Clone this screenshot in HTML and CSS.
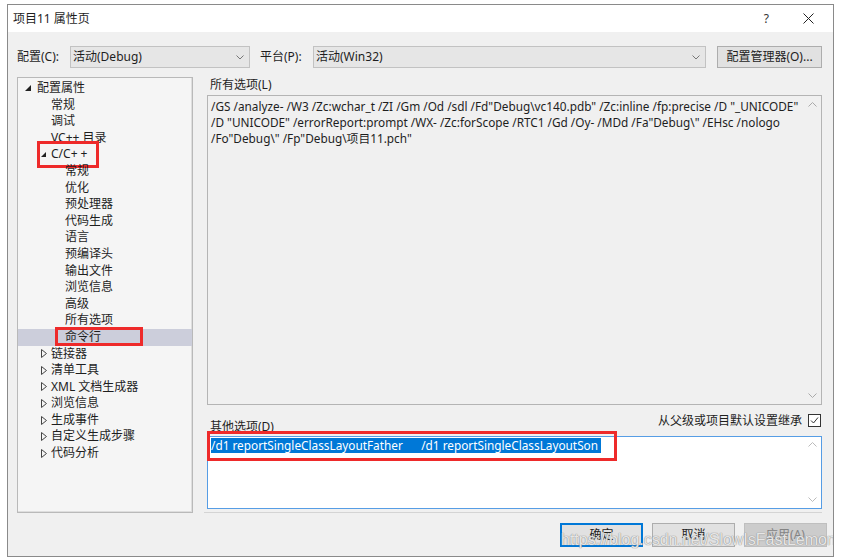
FILE: index.html
```html
<!DOCTYPE html>
<html lang="zh-CN">
<head>
    <meta charset="UTF-8">
    <title>项目11 属性页</title>
    <link rel="stylesheet" href="styles.css">
</head>
<body>
<div class="dialog">
    <div class="titlebar">
        <span class="title">项目11 属性页</span>
        <span class="help">?</span>
        <svg class="close" width="11" height="11" viewBox="0 0 11 11"><path d="M0.5 0.5 L10.5 10.5 M10.5 0.5 L0.5 10.5" stroke="#222" stroke-width="1" fill="none"/></svg>
    </div>

    <div class="config-row">
        <span class="label">配置(C):</span>
        <div class="combo combo-config">
            <span>活动(Debug)</span>
            <svg class="chevron" width="8" height="5" viewBox="0 0 8 5"><path d="M0.5 0.5 L4 4 L7.5 0.5" stroke="#777" fill="none"/></svg>
        </div>
        <span class="label label-platform">平台(P):</span>
        <div class="combo combo-platform">
            <span>活动(Win32)</span>
            <svg class="chevron" width="8" height="5" viewBox="0 0 8 5"><path d="M0.5 0.5 L4 4 L7.5 0.5" stroke="#777" fill="none"/></svg>
        </div>
        <button class="btn btn-manager">配置管理器(O)...</button>
    </div>

    <div class="main">
        <ul class="tree">
            <li class="lv0"><span class="tg"><svg width="6" height="6" viewBox="0 0 6 6"><polygon points="6,0 6,6 0,6" fill="#222"/></svg></span>配置属性</li>
            <li class="lv1"><span class="tg"></span>常规</li>
            <li class="lv1"><span class="tg"></span>调试</li>
            <li class="lv1"><span class="tg"></span>VC++ 目录</li>
            <li class="lv1"><span class="tg"><svg width="5" height="5" viewBox="0 0 5 5"><polygon points="5,0 5,5 0,5" fill="#222"/></svg></span>C/C+ +<span class="mark mark-cpp"></span></li>
            <li class="lv2"><span class="tg"></span>常规</li>
            <li class="lv2"><span class="tg"></span>优化</li>
            <li class="lv2"><span class="tg"></span>预处理器</li>
            <li class="lv2"><span class="tg"></span>代码生成</li>
            <li class="lv2"><span class="tg"></span>语言</li>
            <li class="lv2"><span class="tg"></span>预编译头</li>
            <li class="lv2"><span class="tg"></span>输出文件</li>
            <li class="lv2"><span class="tg"></span>浏览信息</li>
            <li class="lv2"><span class="tg"></span>高级</li>
            <li class="lv2"><span class="tg"></span>所有选项</li>
            <li class="lv2 selected"><span class="tg"></span>命令行<span class="mark mark-cmd"></span></li>
            <li class="lv1"><span class="tg"><svg width="6" height="9" viewBox="0 0 6 9"><polygon points="0.5,0.5 5.5,4.5 0.5,8.5" fill="none" stroke="#444"/></svg></span>链接器</li>
            <li class="lv1"><span class="tg"><svg width="6" height="9" viewBox="0 0 6 9"><polygon points="0.5,0.5 5.5,4.5 0.5,8.5" fill="none" stroke="#444"/></svg></span>清单工具</li>
            <li class="lv1"><span class="tg"><svg width="6" height="9" viewBox="0 0 6 9"><polygon points="0.5,0.5 5.5,4.5 0.5,8.5" fill="none" stroke="#444"/></svg></span>XML 文档生成器</li>
            <li class="lv1"><span class="tg"><svg width="6" height="9" viewBox="0 0 6 9"><polygon points="0.5,0.5 5.5,4.5 0.5,8.5" fill="none" stroke="#444"/></svg></span>浏览信息</li>
            <li class="lv1"><span class="tg"><svg width="6" height="9" viewBox="0 0 6 9"><polygon points="0.5,0.5 5.5,4.5 0.5,8.5" fill="none" stroke="#444"/></svg></span>生成事件</li>
            <li class="lv1"><span class="tg"><svg width="6" height="9" viewBox="0 0 6 9"><polygon points="0.5,0.5 5.5,4.5 0.5,8.5" fill="none" stroke="#444"/></svg></span>自定义生成步骤</li>
            <li class="lv1"><span class="tg"><svg width="6" height="9" viewBox="0 0 6 9"><polygon points="0.5,0.5 5.5,4.5 0.5,8.5" fill="none" stroke="#444"/></svg></span>代码分析</li>
        </ul>

        <div class="options">
            <div class="caption">所有选项(L)</div>
            <div class="textbox all-options">
                <div class="text">/GS /analyze- /W3 /Zc:wchar_t /ZI /Gm /Od /sdl /Fd"Debug\vc140.pdb" /Zc:inline /fp:precise /D "_UNICODE"<br>/D "UNICODE" /errorReport:prompt /WX- /Zc:forScope /RTC1 /Gd /Oy- /MDd /Fa"Debug\" /EHsc /nologo<br>/Fo"Debug\" /Fp"Debug\项目11.pch"</div>
                <div class="scrollbar">
                    <svg width="9" height="5" viewBox="0 0 9 5"><path d="M0.5 4.5 L4.5 0.5 L8.5 4.5" stroke="#aaa" fill="none"/></svg>
                    <svg width="9" height="5" viewBox="0 0 9 5"><path d="M0.5 0.5 L4.5 4.5 L8.5 0.5" stroke="#aaa" fill="none"/></svg>
                </div>
            </div>
            <div class="caption-row">
                <span class="caption">其他选项(D)</span>
                <span class="inherit">从父级或项目默认设置继承
                    <svg class="checkbox" width="13" height="13" viewBox="0 0 13 13"><rect x="0.5" y="0.5" width="12" height="12" fill="#fff" stroke="#333"/><path d="M3 6.5 L5.5 9 L10 3.5" stroke="#333" stroke-width="1" fill="none"/></svg>
                </span>
            </div>
            <div class="textbox other-options">
                <div class="text"><span class="sel">/d1 reportSingleClassLayoutFather      /d1 reportSingleClassLayoutSon </span></div>
                <div class="scrollbar">
                    <svg width="9" height="5" viewBox="0 0 9 5"><path d="M0.5 4.5 L4.5 0.5 L8.5 4.5" stroke="#bbb" fill="none"/></svg>
                    <svg width="9" height="5" viewBox="0 0 9 5"><path d="M0.5 0.5 L4.5 4.5 L8.5 0.5" stroke="#bbb" fill="none"/></svg>
                </div>
                <span class="mark mark-other"></span>
            </div>
            <div class="separator"></div>
        </div>
    </div>

    <div class="footer">
        <button class="btn btn-ok">确定</button>
        <button class="btn">取消</button>
        <button class="btn btn-disabled">应用(A)</button>
    </div>

    <div class="watermark">https://blog.csdn.net/SlowIsFastLemon</div>
</div>
</body>
</html>
```

FILE: styles.css
```css
body {
    margin: 0;
    background-color: #fff;
    font-family: "Noto Sans", "Noto Sans CJK SC", sans-serif;
    font-size: 12px;
    color: #1e1e1e;
}
.dialog {
    position: relative;
    box-sizing: border-box;
    width: 827px;
    height: 553px;
    margin: 4px 0 0 7px;
    border: 1px solid #8a8a8a;
    background-color: #f0f0f0;
    display: flex;
    flex-direction: column;
    overflow: hidden;
}
.titlebar {
    height: 27px;
    background-color: #fff;
    display: flex;
    align-items: center;
    padding: 0 19px 0 5px;
    flex-shrink: 0;
}
.titlebar .title {
    flex: 1;
    font-size: 12px;
    line-height: 16px;
}
.titlebar .help {
    font-size: 12px;
    margin-right: 34px;
    color: #333;
}
.config-row {
    display: flex;
    align-items: center;
    height: 22px;
    margin-top: 14px;
    padding-left: 9px;
}
.config-row .label {
    width: 53px;
    line-height: 16px;
}
.config-row .label-platform {
    margin-left: 10px;
}
.combo {
    box-sizing: border-box;
    height: 22px;
    border: 1px solid #c2c2c2;
    background-color: #e6e6e6;
    display: flex;
    align-items: center;
    justify-content: space-between;
    padding: 0 5px 0 2px;
    line-height: 16px;
}
.combo-config {
    width: 180px;
}
.combo-platform {
    width: 393px;
}
.btn {
    box-sizing: border-box;
    height: 24px;
    width: 83px;
    border: 1px solid #adadad;
    background-color: #e1e1e1;
    font: 12px/16px "Noto Sans", "Noto Sans CJK SC", sans-serif;
    color: #1e1e1e;
    padding: 0;
}
.btn-manager {
    width: 105px;
    height: 22px;
    margin-left: 11px;
}
.main {
    display: grid;
    grid-template-columns: 176px 615px;
    column-gap: 14px;
    height: 436px;
    margin-top: 9px;
    padding-left: 9px;
}
.tree {
    list-style: none;
    margin: 0;
    padding: 2px 0 0 0;
    border: 1px solid #b9b9b9;
    box-shadow: inset -1px -1px 0 #dedede;
    background-color: #f5f5f5;
}
.tree li {
    position: relative;
    height: 16.6px;
    line-height: 16.6px;
    display: flex;
    align-items: center;
    white-space: nowrap;
}
.tree .tg {
    width: 13px;
    height: 16px;
    display: flex;
    align-items: center;
    flex-shrink: 0;
}
.tree .lv0 { padding-left: 6px; }
.tree .lv1 { padding-left: 20px; }
.tree .lv2 { padding-left: 34px; }
.tree .lv1 .tg { padding-left: 3px; width: 10px; }
.tree .lv0 .tg { padding-left: 1px; width: 12px; }
.tree .selected {
    background-color: #cccedb;
}
.mark {
    position: absolute;
    box-sizing: border-box;
    border: 3px solid #ee2a2a;
}
.mark-cpp {
    left: 19px;
    top: -5px;
    width: 62px;
    height: 27px;
}
.mark-cmd {
    left: 37px;
    top: -2px;
    width: 88px;
    height: 19px;
}
.options {
    display: flex;
    flex-direction: column;
}
.caption {
    height: 18px;
    line-height: 16px;
    padding-left: 3px;
}
.textbox {
    position: relative;
    box-sizing: border-box;
    display: flex;
    border: 1px solid #b4b4b4;
}
.textbox .text {
    flex: 1;
    font-size: 11.8px;
    line-height: 16px;
    white-space: nowrap;
}
.all-options {
    height: 310px;
    background-color: #f0f0f0;
}
.all-options .text {
    padding: 2px 0 0 3px;
}
.scrollbar {
    width: 17px;
    display: flex;
    flex-direction: column;
    justify-content: space-between;
    align-items: center;
    padding: 6px 0 6px 0;
}
.caption-row {
    height: 31px;
    display: flex;
    align-items: center;
    justify-content: space-between;
}
.caption-row .caption {
    height: 16px;
    padding-top: 12px;
}
.inherit {
    display: flex;
    align-items: center;
    gap: 6px;
    margin-right: 1px;
    line-height: 16px;
}
.other-options {
    height: 73px;
    background-color: #fff;
    border-color: #569de5;
}
.other-options .text {
    padding: 0 0 0 3px;
    white-space: pre;
}
.other-options .scrollbar {
    padding-top: 5px;
}
.sel {
    background-color: #0078d7;
    color: #fff;
    line-height: 15px;
    display: inline-block;
}
.mark-other {
    left: -1px;
    top: -6px;
    width: 410px;
    height: 30px;
}
.separator {
    height: 1px;
    margin: 3px 0 0 -3px;
    background-color: #d4d4d4;
}
.footer {
    display: flex;
    justify-content: flex-end;
    gap: 9px;
    margin-top: 10px;
    padding-right: 6px;
}
.btn-ok {
    border: 2px solid #0078d7;
}
.btn-disabled {
    background-color: #cccccc;
    border-color: #bfbfbf;
    color: #838383;
}
.watermark {
    position: absolute;
    left: 553px;
    top: 526px;
    font: 16px "Liberation Sans", Arial, sans-serif;
    color: rgba(255, 255, 255, 0.8);
    text-shadow: 0 0 1px #8c8c8c, 0 0 1px #8c8c8c;
    white-space: nowrap;
}
```
